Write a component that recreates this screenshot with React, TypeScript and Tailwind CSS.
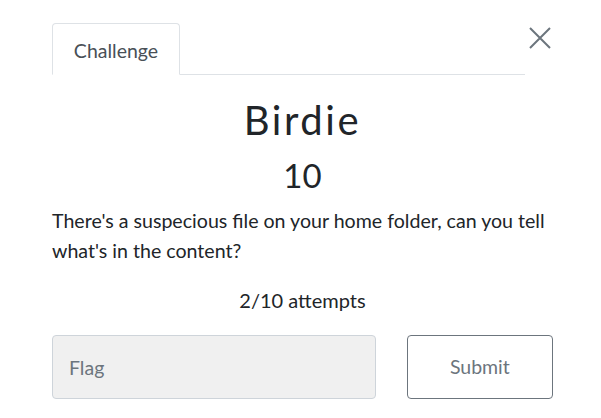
export default function App() {
  return (
    <div className="relative h-[418px] w-[601px] overflow-hidden bg-white font-['Lato','Noto_Sans',sans-serif] text-[#212529]">
      {/* Close button */}
      <button className="absolute left-[528px] top-[27px] text-[#6c757d]">
        <svg width="24" height="22" viewBox="0 0 24 22" fill="none" stroke="currentColor" strokeWidth="2">
          <path d="M2 1 L22 21 M22 1 L2 21" />
        </svg>
      </button>

      <div className="pl-[52px] pr-[48px] pt-[23px]">
        {/* Tabs */}
        <div className="mr-[28px] flex border-b border-[#dee2e6]">
          <div className="-mb-px flex h-[52px] w-[128px] items-center justify-center rounded-t-[4px] border border-[#dee2e6] border-b-white bg-white pt-[3px] text-[19.5px] text-[#495057]">
            Challenge
          </div>
        </div>

        {/* Body */}
        <div className="flex flex-col">
          <h2 className="mt-[21px] text-center text-[40px] leading-[48px] tracking-[2.6px]">Birdie</h2>
          <h3 className="mt-[11px] text-center text-[33px] leading-[40px]">10</h3>
          <p className="mt-[11px] text-[19.6px] leading-[30px]">
            There's a suspecious file on your home folder, can you tell what's in the content?
          </p>
          <p className="mt-[19px] text-center text-[20px] leading-[30px]">2/10 attempts</p>

          <div className="mt-[20px] flex gap-[31px]">
            <input
              placeholder="Flag"
              className="h-[64px] w-[325px] rounded-[4px] border border-[#ced4da] bg-[#f0f0f0] px-[16px] text-[19.5px] text-[#495057] outline-none placeholder:text-[#6c757d]"
            />
            <button className="h-[64px] w-[147px] rounded-[4px] border border-[#6c757d] bg-white text-[19.5px] text-[#6c757d]">
              Submit
            </button>
          </div>
        </div>
      </div>
    </div>
  );
}
